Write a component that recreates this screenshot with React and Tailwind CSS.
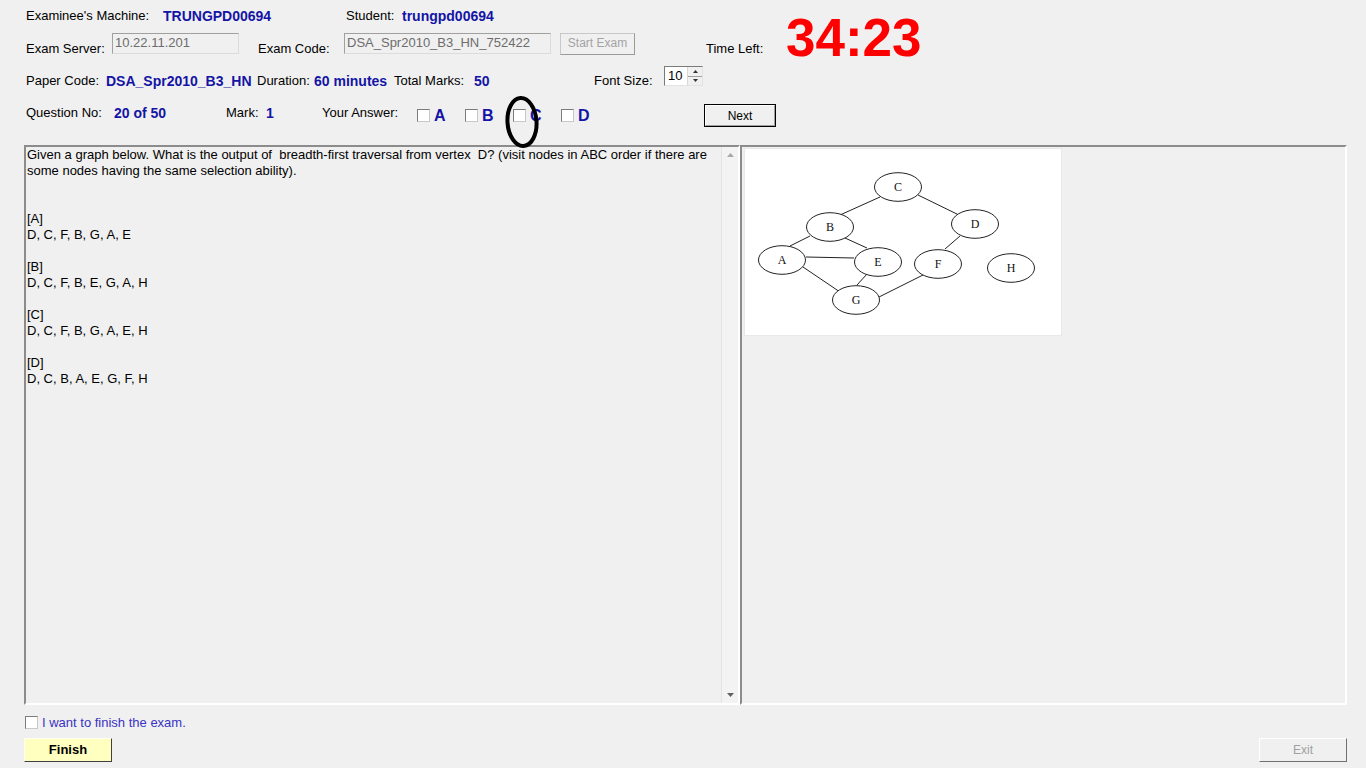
import React from 'react'

const nodes = [
  { id: 'C', x: 154, y: 39 },
  { id: 'B', x: 86, y: 79 },
  { id: 'D', x: 231, y: 76 },
  { id: 'A', x: 38, y: 112 },
  { id: 'E', x: 134, y: 114 },
  { id: 'F', x: 194, y: 116 },
  { id: 'H', x: 267, y: 120 },
  { id: 'G', x: 112, y: 152 }
]

const edges = [
  [136, 49, 96, 67],
  [174, 47, 219, 69],
  [216, 88, 201, 101],
  [66, 88, 46, 98],
  [101, 90, 123, 100],
  [62, 109, 110, 110],
  [59, 119, 96, 144],
  [123, 126, 113, 137],
  [179, 127, 135, 149]
]

const Blue = ({ children, className = '' }) => (
  <span className={`text-[14px] font-bold text-[#1414a6] whitespace-nowrap ${className}`}>{children}</span>
)

const Check = ({ className = '' }) => (
  <span className={`inline-block w-[13px] h-[13px] bg-white border border-t-[#7c7c7c] border-l-[#7c7c7c] border-r-[#c8c8c8] border-b-[#c8c8c8] shrink-0 ${className}`} />
)

const Graph = () => (
  <svg width="318" height="188" viewBox="0 0 318 188" className="block bg-white">
    {edges.map((e, i) => (
      <line key={i} x1={e[0]} y1={e[1]} x2={e[2]} y2={e[3]} stroke="#222" strokeWidth="1" />
    ))}
    {nodes.map(n => (
      <g key={n.id}>
        <ellipse cx={n.x} cy={n.y} rx="23.5" ry="14.3" fill="white" stroke="#222" strokeWidth="1" />
        <text x={n.x} y={n.y + 4} textAnchor="middle" fontSize="12" fontFamily="'Liberation Serif', serif" fill="#111">{n.id}</text>
      </g>
    ))}
    <rect x="0.5" y="0.5" width="317" height="187" fill="none" stroke="#e8e8e8" />
  </svg>
)

const questionLines = [
  'Given a graph below. What is the output of  breadth-first traversal from vertex  D? (visit nodes in ABC order if there are',
  'some nodes having the same selection ability).',
  '',
  '',
  '[A]',
  'D, C, F, B, G, A, E',
  '',
  '[B]',
  'D, C, F, B, E, G, A, H',
  '',
  '[C]',
  'D, C, F, B, G, A, E, H',
  '',
  '[D]',
  'D, C, B, A, E, G, F, H'
]

export default function App() {
  return (
    <div className="relative w-[1366px] h-[768px] overflow-hidden bg-[#f0f0f0] text-[13px] leading-[16px] text-black font-['Liberation_Sans',Arial,sans-serif]">
      {/* Header */}
      <div className="h-[145px]">
        {/* row 1 */}
        <div className="flex items-center h-[32px] pl-[26px]">
          <span className="w-[137px]">Examinee's Machine:</span>
          <Blue className="w-[183px]">TRUNGPD00694</Blue>
          <span className="w-[56px]">Student:</span>
          <Blue>trungpd00694</Blue>
        </div>

        {/* row 2 */}
        <div className="flex items-start h-[32px] pt-[1px] pl-[26px]">
          <span className="w-[86px] mt-[8px]">Exam Server:</span>
          <div className="w-[127px] h-[21px] border border-t-[#a0a0a0] border-l-[#a0a0a0] border-r-[#dcdcdc] border-b-[#dcdcdc] pl-[2px] pt-[1px] text-[#6d6d6d]">10.22.11.201</div>
          <span className="ml-[19px] w-[86px] mt-[8px]">Exam Code:</span>
          <div className="w-[207px] h-[21px] border border-t-[#a0a0a0] border-l-[#a0a0a0] border-r-[#dcdcdc] border-b-[#dcdcdc] pl-[2px] pt-[1px] text-[#6d6d6d]">DSA_Spr2010_B3_HN_752422</div>
          <div className="ml-[9px] w-[75px] h-[22px] pb-[2px] border border-t-[#c8c8c8] border-l-[#c8c8c8] border-r-[#9a9a9a] border-b-[#9a9a9a] flex items-center justify-center text-[12px] text-[#a3a3a3]">Start Exam</div>
          <span className="ml-[71px] w-[80px] mt-[8px]">Time Left:</span>
          <span className="mt-[-22px] text-[53px] leading-none font-bold text-[#ff0000]">34:23</span>
        </div>

        {/* row 3 */}
        <div className="flex items-center h-[32px] pl-[26px] pt-[2px]">
          <span className="w-[80px]">Paper Code:</span>
          <Blue className="w-[151px] overflow-hidden">DSA_Spr2010_B3_HN</Blue>
          <span className="w-[57px]">Duration:</span>
          <Blue className="w-[80px]">60 minutes</Blue>
          <span className="w-[80px]">Total Marks:</span>
          <Blue className="w-[120px]">50</Blue>
          <span className="w-[70px]">Font Size:</span>
          <div className="self-start mt-[0px] w-[39px] h-[20px] bg-white border border-t-[#7a7a7a] border-l-[#7a7a7a] border-r-[#e3e3e3] border-b-[#e3e3e3] flex">
            <span className="flex-1 pl-[3px] pt-[1px] text-[13px]">10</span>
            <div className="w-[15px] flex flex-col border-l border-[#d8d8d8]">
              <div className="flex-1 bg-[#f0f0f0] border-b border-[#a0a0a0] flex items-center justify-center">
                <svg width="5" height="3" viewBox="0 0 5 3"><path d="M2.5 0L5 3H0z" fill="#333" /></svg>
              </div>
              <div className="flex-1 bg-[#f0f0f0] flex items-center justify-center">
                <svg width="5" height="3" viewBox="0 0 5 3"><path d="M0 0h5L2.5 3z" fill="#333" /></svg>
              </div>
            </div>
          </div>
        </div>

        {/* row 4 */}
        <div className="flex items-center h-[32px] pl-[26px] pt-[1px]">
          <span className="w-[88px]">Question No:</span>
          <Blue className="w-[112px]">20 of 50</Blue>
          <span className="w-[40px]">Mark:</span>
          <Blue className="w-[56px]">1</Blue>
          <span className="w-[95px]">Your Answer:</span>
          <div className="flex mt-[6px]">
            {['A', 'B', 'C', 'D'].map(l => (
              <div key={l} className="w-[48px] flex items-center">
                <Check className="mr-[4px]" />
                <span className="text-[16px] font-bold text-[#1414a6] leading-[18px]">{l}</span>
              </div>
            ))}
          </div>
          <div className="ml-[95px] mt-[6px] w-[72px] h-[23px] border border-black bg-[#f0f0f0] flex items-center justify-center text-[12px]">
            <div className="w-full h-full border border-t-white border-l-white border-r-[#a0a0a0] border-b-[#a0a0a0] flex items-center justify-center">Next</div>
          </div>
        </div>
      </div>

      {/* Panels */}
      <div className="flex h-[560px] pl-[24px]">
        <div className="w-[716px] h-full flex border-2 border-t-[#8c8c8c] border-l-[#8c8c8c] border-r-white border-b-white">
          <div className="flex-1 pl-[1px] overflow-hidden">
            {questionLines.map((line, i) => (
              <div key={i} className="h-[16px] whitespace-pre">{line}</div>
            ))}
          </div>
          <div className="w-[17px] h-full bg-[#f3f3f3] border-l border-[#e4e4e4] flex flex-col justify-between items-center pt-[6px] pb-[6px]">
            <svg width="7" height="4" viewBox="0 0 7 4"><path d="M3.5 0L7 4H0z" fill="#a8a8a8" /></svg>
            <svg width="7" height="4" viewBox="0 0 7 4"><path d="M0 0h7L3.5 4z" fill="#606060" /></svg>
          </div>
        </div>
        <div className="w-[607px] h-full border-2 border-t-[#8c8c8c] border-l-[#8c8c8c] border-r-white border-b-white pl-[2px] pt-[1px]">
          <Graph />
        </div>
      </div>

      {/* Footer */}
      <div className="flex items-center pl-[25px] mt-[11px] h-[13px]">
        <Check />
        <span className="ml-[4px] text-[#3a33c4]">I want to finish the exam.</span>
      </div>
      <div className="flex justify-between pl-[24px] pr-[19px] mt-[9px]">
        <div className="w-[88px] h-[24px] pb-[1px] bg-[#ffffc0] border border-t-[#fffff0] border-l-[#fffff0] border-r-[#404040] border-b-[#404040] flex items-center justify-center font-bold text-[13px]">Finish</div>
        <div className="w-[88px] h-[24px] pb-[1px] border border-t-white border-l-white border-r-[#707070] border-b-[#707070] flex items-center justify-center text-[12px] text-[#a0a0a0]">Exit</div>
      </div>

      {/* hand-drawn circle annotation */}
      <svg className="absolute left-[502px] top-[94px]" width="40" height="56" viewBox="0 0 40 56">
        <ellipse cx="20" cy="28" rx="14.5" ry="24" fill="none" stroke="#000" strokeWidth="4" transform="rotate(-4 20 28)" />
      </svg>
    </div>
  )
}
